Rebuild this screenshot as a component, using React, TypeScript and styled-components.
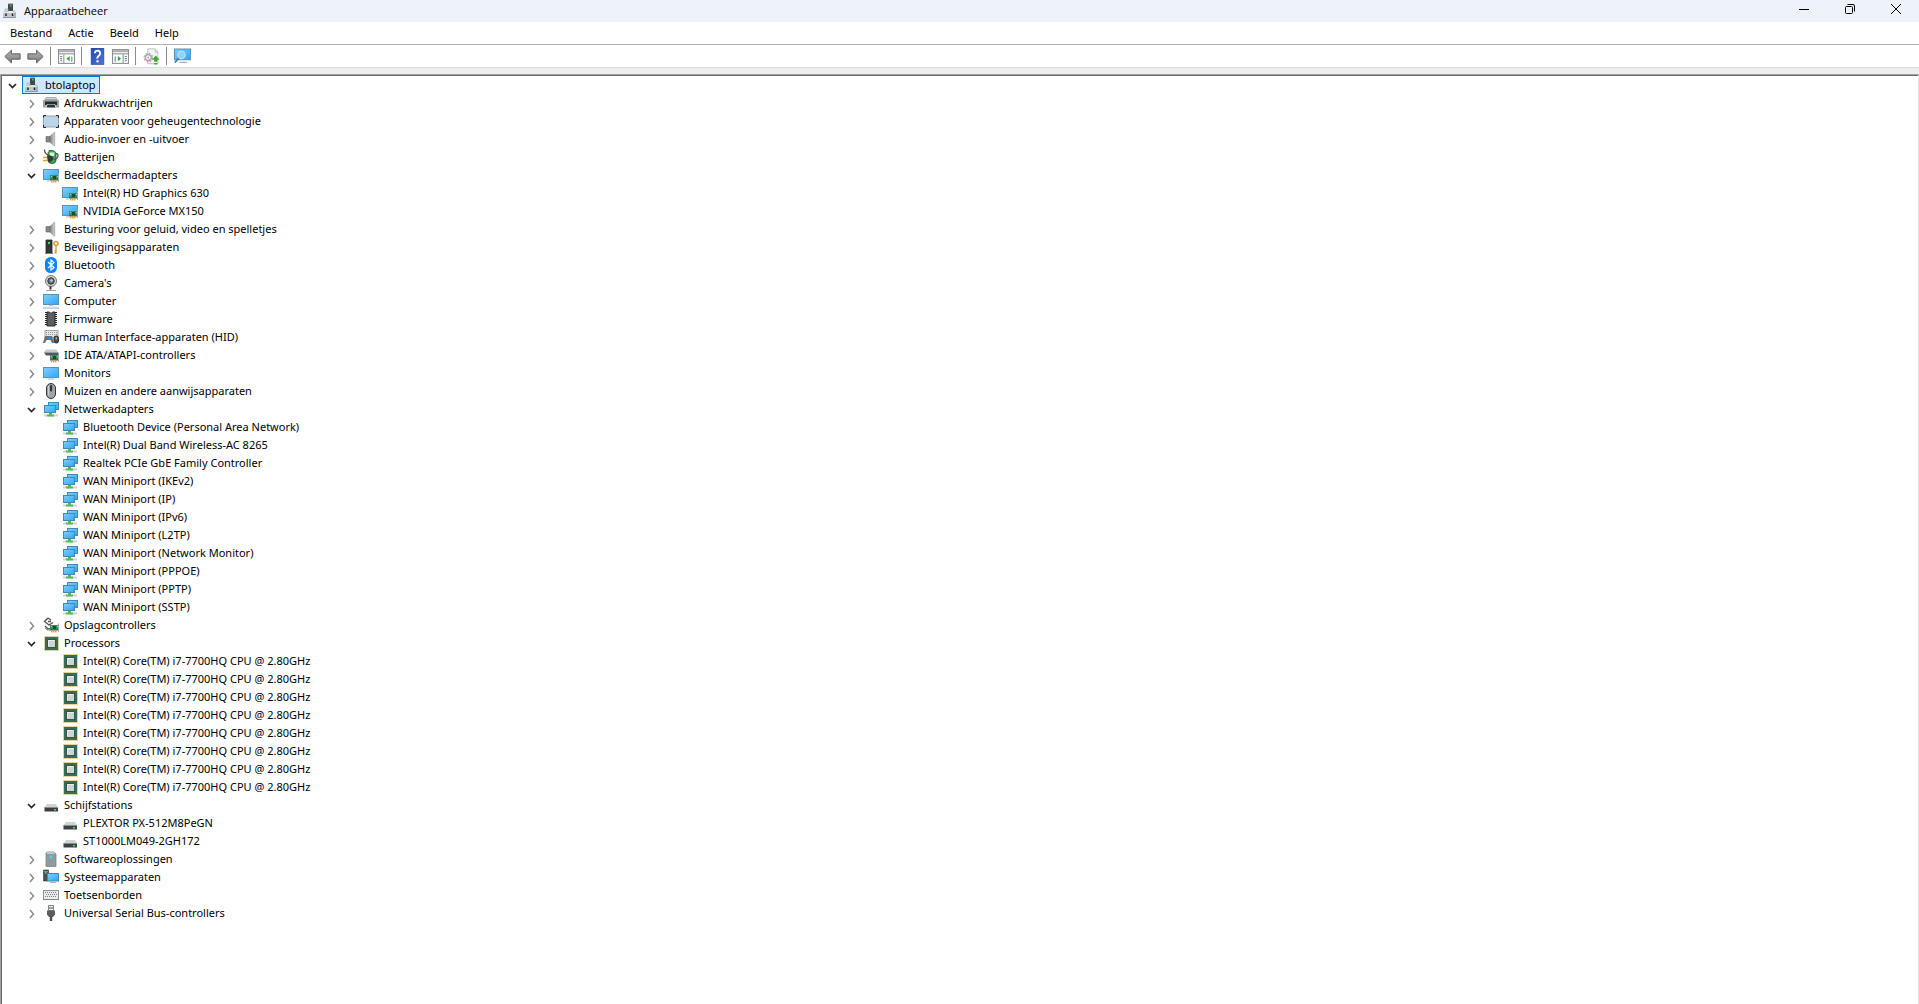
import React, { useState } from 'react';
import styled, { createGlobalStyle } from 'styled-components';

const GlobalStyle = createGlobalStyle`
  html, body { margin: 0; background: #fff; }
  body, button {
    font-family: 'Noto Sans', 'Open Sans', sans-serif;
    font-size: 11px;
    line-height: 16px;
    color: #000;
  }
  *, *::before, *::after { box-sizing: border-box; }
`;

const Window = styled.div`
  display: flex;
  flex-direction: column;
  min-height: 100vh;
  background: #fff;
`;

const TitleBar = styled.header`
  display: flex;
  align-items: flex-start;
  justify-content: space-between;
  height: 22px;
  padding-left: 2px;
  background: #eef2fa;
`;

const Caption = styled.h1`
  display: flex;
  align-items: center;
  gap: 6px;
  height: 21px;
  margin: 0;
  font-family: 'Open Sans', 'Noto Sans', sans-serif;
  font-size: 11px;
  font-weight: 400;
`;

const WindowButtons = styled.div`
  display: flex;
`;

const PlainButton = styled.button`
  display: flex;
  align-items: center;
  justify-content: center;
  margin: 0;
  padding: 0;
  border: 0;
  background: transparent;
  &:hover { background: #e5f3ff; }
`;

const WindowButton = styled(PlainButton)`
  width: 46px;
  height: 18px;
`;

const MenuBar = styled.nav`
  display: flex;
  height: 23px;
  padding-left: 2px;
  border-bottom: 1px solid #b0b0b0;
`;

const MenuItem = styled(PlainButton)`
  height: 22px;
  padding: 0 8px;
`;

const Toolbar = styled.div`
  display: flex;
  align-items: flex-end;
  height: 23px;
  padding-left: 1px;
  border-bottom: 1px solid #dcdcdc;
`;

const ToolButton = styled(PlainButton)`
  width: 23px;
  height: 21px;
`;

const Separator = styled.span`
  width: 8px;
  height: 20px;
  padding-left: 3px;
  &::before {
    content: '';
    display: block;
    width: 1px;
    height: 18px;
    background: #8c8c8c;
  }
`;

const Frame = styled.main`
  display: flex;
  flex: 1;
  padding-top: 6px;
  background: #eeeeee;
`;

const Panel = styled.div`
  flex: 1;
  border: 1px solid #a0a0a0;
  border-right-color: #e3e3e3;
  border-bottom: 0;
`;

const Tree = styled.ul`
  height: 100%;
  margin: 0;
  padding: 0 0 0 1px;
  list-style: none;
  background: #fff;
  border-top: 1px solid #696969;
  border-left: 1px solid #696969;
`;

const Branch = styled.ul`
  margin: 0;
  padding: 0 0 0 19px;
  list-style: none;
`;

const Row = styled.div`
  display: flex;
  height: 18px;
`;

const Toggle = styled(PlainButton)`
  width: 19px;
  height: 18px;
`;

const Indent = styled.span`
  width: 19px;
`;

const Label = styled.span<{ $selected?: boolean }>`
  display: flex;
  align-items: center;
  gap: 5px;
  height: 18px;
  padding: 0 3px 0 1px;
  border: 1px solid ${p => (p.$selected ? '#0078d7' : 'transparent')};
  background: ${p => (p.$selected ? '#cce8ff' : 'transparent')};
  white-space: nowrap;
`;

const Glyph = styled.svg`
  display: block;
  flex: none;
`;

const SharedDefs = styled.svg`
  display: block;
  width: 0;
  height: 0;
`;

const Gradients = () => (
  <SharedDefs aria-hidden="true">
    <defs>
      <linearGradient id="screen" x1="0" y1="0" x2="1" y2="1">
        <stop offset="0" stopColor="#7fd0fd" />
        <stop offset="1" stopColor="#2ea5fa" />
      </linearGradient>
      <linearGradient id="metal" x1="0" y1="0" x2="1" y2="0">
        <stop offset="0" stopColor="#6e7276" />
        <stop offset="1" stopColor="#c9cdd0" />
      </linearGradient>
      <linearGradient id="arrow" x1="0" y1="0" x2="0" y2="1">
        <stop offset="0" stopColor="#b4b4b4" />
        <stop offset="1" stopColor="#7d7d7d" />
      </linearGradient>
      <linearGradient id="help" x1="0" y1="0" x2="1" y2="1">
        <stop offset="0" stopColor="#2447a8" />
        <stop offset="1" stopColor="#4c76dc" />
      </linearGradient>
    </defs>
  </SharedDefs>
);

const Card = () => (
  <>
    <path d="M15.500 6.500V15" stroke="#a5abaf" />
    <rect x="7" y="8" width="8" height="5" fill="#3f8a68" />
    <path d="M7 13h8" stroke="#225c40" />
    <rect x="10" y="9" width="3" height="3" fill="#1c4a33" />
    <path d="M8 9.500h1M14 9.500h1" stroke="#9ad8b0" />
    <path d="M8 14.500h6" stroke="#f0a020" strokeWidth="2" strokeDasharray="1.500 .5" />
  </>
);

const icons: Record<string, React.ReactNode> = {
  machine: (
    <>
      <rect x="6" y="1" width="5" height="7" fill="#43484b" />
      <path d="M6 1h5" stroke="#777c7f" />
      <rect x="8" y="2" width="1.500" height="1.500" fill="#39c558" />
      <path d="M3 6h3v3H3z" fill="#dddfe0" stroke="#a4a8aa" strokeWidth=".7" />
      <path d="M11 7.500h2v2h-2z" fill="#b9bcbf" />
      <rect x="1" y="9" width="12.500" height="6" fill="#c3c5c7" />
      <path d="M1 14.500h12.500M13 9v6" stroke="#8f9395" />
      <path d="M1 9.500h12" stroke="#e2e4e5" />
      <path d="M4 10.500v2.500M10.500 10.500v2.500" stroke="#202326" strokeWidth="1.500" />
    </>
  ),
  printer: (
    <>
      <path d="M3 2.500h10l1 3H2z" fill="#d3d9dd" stroke="#8b9093" strokeWidth=".7" />
      <path d="M0 6q0-1.500 2-1.500h12q2 0 2 1.500v6.500H0z" fill="#9ca1a4" />
      <path d="M2 6.500h12v3.500H2z" fill="#26292b" />
      <path d="M4 9h8l1.500 4h-11z" fill="#e9ebec" />
      <path d="M4.500 9.500h7l1 3h-9z" fill="#303436" />
      <path d="M3 4.500h10" stroke="#5fc5a6" />
    </>
  ),
  memory: (
    <>
      <rect x=".5" y="3" width="15" height="11" rx="1" fill="#bdd3e6" stroke="#8fa8bd" />
      <path d="M.5 4.500v-2H3M13 2.500h2.500v2.500M15.500 12v2.500H13M3 14.500H.5V12" fill="none" stroke="#24282b" />
    </>
  ),
  speaker: (
    <>
      <path d="M3 5.500h4v5.500H3z" fill="#85898d" stroke="#5f6366" strokeWidth=".6" />
      <path d="M6.500 5.500 11 1v14.500L6.500 11z" fill="url(#metal)" />
      <path d="M11.500 1v14.500" stroke="#b5b8bb" strokeWidth="1.400" />
    </>
  ),
  battery: (
    <>
      <path d="M6 1.500h4l1.500 1q1.500.5 1.500 2v7q0 3-4 3t-4-3v-7q0-1.500 1-2z" fill="#32b14a" stroke="#30483a" strokeWidth=".8" />
      <path d="M6.500 3.500h5L11 7H7z" fill="#d9f3dc" />
      <path d="M1.500 .5q0 4 3.500 5.500M12.500 5q2.500-1 2.500 1.500T11 11" fill="none" stroke="#4a4f52" strokeWidth="1.200" />
      <path d="M4 6.500q5-1 6.500 3Q9 13.500 5 13z" fill="#34383b" />
      <path d="M0 8.500h4M0 11.500h4" stroke="#d9a82c" strokeWidth="1.300" />
    </>
  ),
  display: (
    <>
      <rect x=".5" y="2.500" width="15" height="10" fill="url(#screen)" stroke="#5b93b5" />
      <path d="M4 14h3" stroke="#b0b6ba" />
      <Card />
    </>
  ),
  security: (
    <>
      <path d="M3 1h6v13H3z" fill="#34383b" stroke="#202325" strokeWidth=".8" />
      <rect x="5" y="3" width="2" height="2" fill="#35e35a" />
      <path d="M2 14.500h8" stroke="#7c8184" />
      <circle cx="13" cy="4.500" r="2" fill="none" stroke="#d9a33a" strokeWidth="1.600" />
      <path d="M13 6.500v8M13 11.500h-1.500M13 13.500h-1.500" stroke="#d9a33a" strokeWidth="1.400" />
    </>
  ),
  bluetooth: (
    <>
      <rect x="2" y="0" width="12" height="16" rx="5.500" fill="#0a84ff" />
      <path d="m5 5 6 5.500L8 13V3l3 2.500L5 11" fill="none" stroke="#fff" strokeWidth="1.200" />
    </>
  ),
  camera: (
    <>
      <circle cx="8" cy="6" r="5.500" fill="#d4d6d8" stroke="#74787c" />
      <circle cx="8" cy="6" r="3.200" fill="#6b7074" stroke="#2b2f32" />
      <circle cx="8.500" cy="5.500" r="1.200" fill="#cbd5dc" />
      <path d="M7.500 11.500v3" stroke="#303437" strokeWidth="2" />
      <path d="M3 15.500h10" fill="none" stroke="#a0a5a8" />
    </>
  ),
  computer: (
    <>
      <rect x=".5" y="1.500" width="15" height="10" fill="url(#screen)" stroke="#5b93b5" />
      <path d="M6 12.500h4" stroke="#c0cbd3" />
      <path d="M0 15h16" stroke="#8fa5b4" />
      <path d="M1 14h14" stroke="#dbe3e8" />
    </>
  ),
  monitor: (
    <>
      <rect x=".5" y="2.500" width="15" height="10" fill="url(#screen)" stroke="#5b93b5" />
      <path d="M5 14h6" stroke="#a4b4bf" />
    </>
  ),
  firmware: (
    <>
      <path d="M3 1v14M13 1v14" stroke="#202325" strokeWidth="2" strokeDasharray="1 1" />
      <path d="M4 1h2q2 2.500 4 0h2v14H4z" fill="#5b5f62" stroke="#202325" strokeWidth=".9" />
    </>
  ),
  hid: (
    <>
      <rect x="2" y="1.500" width="13" height="7" fill="#e6e8ea" stroke="#a1a5a8" />
      <path d="M3 3.500h11M3 5.500h11" stroke="#8e9296" strokeDasharray="1 1" />
      <path d="M2 7h7l2 7H9L7.500 11h-4L2 14H0z" fill="#6a6f73" />
      <circle cx="6.500" cy="9" r="1.500" fill="#1e90e8" />
      <rect x="11" y="7" width="4.500" height="7" rx="2.200" fill="#4c5054" stroke="#25292c" />
      <path d="M13.200 8v2.500" stroke="#c5c9cc" />
    </>
  ),
  ide: (
    <>
      <path d="M3 2.500h10l2.500 3H1z" fill="#c8cbcd" />
      <path d="M1 5.500h14.500v3H3z" fill="#55595c" />
      <Card />
    </>
  ),
  mouse: (
    <>
      <rect x="3.500" y=".5" width="9" height="15" rx="4.500" fill="#9fa5ab" stroke="#303438" />
      <path d="M5.500 3v9.500" stroke="#ccd1d5" />
      <rect x="7" y="2" width="2.200" height="6.500" rx="1" fill="#32373b" />
    </>
  ),
  network: (
    <>
      <path d="M1 14.500h14" stroke="#cfd2d4" strokeWidth="2" />
      <rect x="5.500" y="1.500" width="10" height="7" fill="url(#screen)" stroke="#4489b5" />
      <rect x="1.500" y="4.500" width="11" height="7" fill="url(#screen)" stroke="#4489b5" />
      <path d="M6 12h3v1.500h2V15.500H4v-2h2z" fill="#4fbf53" />
    </>
  ),
  storage: (
    <>
      <path d="M5 1 1.500 4.500 6 8l4-2.500M5 1l3 2M5 4.500h3M2 9l3 3 3-1" fill="none" stroke="#4d5154" strokeWidth="1.300" />
      <path d="M2 11q1.500 3 5 2" fill="none" stroke="#7b7f82" />
      <Card />
    </>
  ),
  cpu: (
    <>
      <rect x="1.500" y="1.500" width="14" height="14" fill="none" stroke="#c4a83e" strokeDasharray="1 1" />
      <rect x="2" y="2" width="13" height="13" fill="#3a6b54" />
      <rect x="4" y="4" width="9" height="9" fill="#2c5a44" />
      <rect x="5" y="5" width="7" height="7" fill="#d2d4d3" />
      <path d="M5.500 11V5.500h6" fill="none" stroke="#eceded" />
    </>
  ),
  disk: (
    <>
      <path d="M4 7h9L15 10.500H1.500z" fill="#d0d3d5" />
      <rect x="1.500" y="10.500" width="13.500" height="4" fill="#3d4143" />
      <path d="M1.500 10.500H15" stroke="#8a8e90" />
      <rect x="11" y="12" width="2" height="1.500" fill="#3ee05b" />
    </>
  ),
  software: (
    <>
      <path d="M4 1h7l2 2v12.500H3V2z" fill="#8f999f" stroke="#7b858b" strokeWidth=".8" />
      <path d="M4 1h7l1 2H3.500z" fill="#c0c7cb" />
      <circle cx="8" cy="6" r="1.500" fill="#43d5ee" />
    </>
  ),
  system: (
    <>
      <path d="M.5 1h5v11h-5z" fill="#4b5053" stroke="#34383b" strokeWidth=".6" />
      <path d="M1 2.500h4" stroke="#8a8f93" />
      <rect x="2" y="3" width="1.500" height="1.500" fill="#40dc60" />
      <rect x="4.500" y="4.500" width="11" height="7.500" fill="url(#screen)" stroke="#4489b5" />
      <path d="M7 13.500h6" stroke="#aab5bc" />
    </>
  ),
  keyboard: (
    <>
      <rect x=".5" y="3.500" width="15" height="9" fill="#e9ebed" stroke="#8f9498" />
      <path d="M2 5.500h12M2 9.500h12" stroke="#7b8286" strokeDasharray="1 1" />
      <path d="M3 7.500h11" stroke="#7b8286" strokeDasharray="1 1" />
      <path d="M0 12.500h16" stroke="#7d8387" />
    </>
  ),
  usb: (
    <>
      <path d="M5.500.5h5v5h-5z" fill="#eceeef" stroke="#7f8487" />
      <path d="M7 2v2M9 2v2" stroke="#55595c" />
      <path d="M4 5.500h8v4L10 12H6L4 9.500z" fill="#5a5e61" />
      <path d="M8 11.500V16" stroke="#494d50" strokeWidth="2.400" />
    </>
  ),
};

const Icon = ({ name, size = 16 }: { name: string; size?: number }) => (
  <Glyph width={size} height={size} viewBox="0 0 16 16" aria-hidden="true">
    {icons[name]}
  </Glyph>
);

const Chevron = ({ open }: { open: boolean }) => (
  <Glyph width="11" height="12" viewBox="0 0 11 12" aria-hidden="true">
    {open ? (
      <path d="m2 5 3.500 3.500L9 5" fill="none" stroke="#262626" strokeWidth="1.700" />
    ) : (
      <path d="m4 3 3.500 4L4 11" fill="none" stroke="#8c8c8c" strokeWidth="1.500" />
    )}
  </Glyph>
);

interface Device {
  icon: string;
  name: string;
  children?: Device[];
}

const same = (icon: string, names: string[]): Device[] => names.map(name => ({ icon, name }));

const categories: Device[] = [
  { icon: 'printer', name: 'Afdrukwachtrijen' },
  { icon: 'memory', name: 'Apparaten voor geheugentechnologie' },
  { icon: 'speaker', name: 'Audio-invoer en -uitvoer' },
  { icon: 'battery', name: 'Batterijen' },
  {
    icon: 'display',
    name: 'Beeldschermadapters',
    children: same('display', ['Intel(R) HD Graphics 630', 'NVIDIA GeForce MX150']),
  },
  { icon: 'speaker', name: 'Besturing voor geluid, video en spelletjes' },
  { icon: 'security', name: 'Beveiligingsapparaten' },
  { icon: 'bluetooth', name: 'Bluetooth' },
  { icon: 'camera', name: "Camera's" },
  { icon: 'computer', name: 'Computer' },
  { icon: 'firmware', name: 'Firmware' },
  { icon: 'hid', name: 'Human Interface-apparaten (HID)' },
  { icon: 'ide', name: 'IDE ATA/ATAPI-controllers' },
  { icon: 'monitor', name: 'Monitors' },
  { icon: 'mouse', name: 'Muizen en andere aanwijsapparaten' },
  {
    icon: 'network',
    name: 'Netwerkadapters',
    children: same('network', [
      'Bluetooth Device (Personal Area Network)',
      'Intel(R) Dual Band Wireless-AC 8265',
      'Realtek PCIe GbE Family Controller',
      'WAN Miniport (IKEv2)',
      'WAN Miniport (IP)',
      'WAN Miniport (IPv6)',
      'WAN Miniport (L2TP)',
      'WAN Miniport (Network Monitor)',
      'WAN Miniport (PPPOE)',
      'WAN Miniport (PPTP)',
      'WAN Miniport (SSTP)',
    ]),
  },
  { icon: 'storage', name: 'Opslagcontrollers' },
  {
    icon: 'cpu',
    name: 'Processors',
    children: same('cpu', Array(8).fill('Intel(R) Core(TM) i7-7700HQ CPU @ 2.80GHz')),
  },
  {
    icon: 'disk',
    name: 'Schijfstations',
    children: same('disk', ['PLEXTOR PX-512M8PeGN', 'ST1000LM049-2GH172']),
  },
  { icon: 'software', name: 'Softwareoplossingen' },
  { icon: 'system', name: 'Systeemapparaten' },
  { icon: 'keyboard', name: 'Toetsenborden' },
  { icon: 'usb', name: 'Universal Serial Bus-controllers' },
];

const Node = ({ device, level = 1 }: { device: Device; level?: number }) => {
  const [open, setOpen] = useState(Boolean(device.children));
  return (
    <li>
      <Row>
        {level < 2 ? (
          <Toggle aria-label={device.name} aria-expanded={open} onClick={() => setOpen(!open)}>
            <Chevron open={open} />
          </Toggle>
        ) : (
          <Indent />
        )}
        <Label $selected={level === 0}>
          <Icon name={device.icon} />
          {device.name}
        </Label>
      </Row>
      {open && device.children && (
        <Branch>
          {device.children.map((child, i) => (
            <Node key={i} device={child} level={level + 1} />
          ))}
        </Branch>
      )}
    </li>
  );
};

const PaneArt = () => (
  <>
    <rect x=".5" y="1.500" width="15" height="13" fill="#fff" stroke="#8b8f92" />
    <path d="M1 3h14" stroke="#a9adb0" strokeWidth="2" />
    <path d="M1 5.500h14" stroke="#8b8f92" />
  </>
);

const Tool = ({ label, children }: { label: string; children: React.ReactNode }) => (
  <ToolButton aria-label={label}>
    <Glyph width="17" height="17" viewBox="0 0 16 16" aria-hidden="true">
      {children}
    </Glyph>
  </ToolButton>
);

export default function App() {
  return (
    <Window>
      <GlobalStyle />
      <Gradients />
      <TitleBar>
        <Caption>
          <Icon name="machine" />
          Apparaatbeheer
        </Caption>
        <WindowButtons>
          <WindowButton aria-label="Minimaliseren">
            <Glyph width="10" height="10" viewBox="0 0 10 10">
              <path d="M0 5.500h10" stroke="#000" />
            </Glyph>
          </WindowButton>
          <WindowButton aria-label="Verkleinen">
            <Glyph width="10" height="10" viewBox="0 0 10 10" fill="none" stroke="#000">
              <rect x=".5" y="2.500" width="7" height="7" rx="1" />
              <path d="M2.500.5H8Q9.500.5 9.500 2v5.500" />
            </Glyph>
          </WindowButton>
          <WindowButton aria-label="Sluiten">
            <Glyph width="10" height="10" viewBox="0 0 10 10">
              <path d="m0 0 10 10M10 0 0 10" stroke="#000" />
            </Glyph>
          </WindowButton>
        </WindowButtons>
      </TitleBar>
      <MenuBar>
        <MenuItem>Bestand</MenuItem>
        <MenuItem>Actie</MenuItem>
        <MenuItem>Beeld</MenuItem>
        <MenuItem>Help</MenuItem>
      </MenuBar>
      <Toolbar>
        <Tool label="Vorige">
          <path d="M.8 8 7 2v3.500h8.200v5H7V14z" fill="url(#arrow)" stroke="#5c5c5c" strokeWidth=".9" />
        </Tool>
        <Tool label="Volgende">
          <path d="M15.200 8 9 2v3.500H.8v5H9V14z" fill="url(#arrow)" stroke="#5c5c5c" strokeWidth=".9" />
        </Tool>
        <Separator />
        <Tool label="Consolestructuur weergeven">
          <PaneArt />
          <path d="M5.500 6v8" stroke="#8b8f92" />
          <path d="M2 8h2M2 10h2M2 12h2M13 8v5" stroke="#6785a5" />
          <path d="M11 7.500v5L8 10z" fill="#2fa52f" />
        </Tool>
        <Separator />
        <Tool label="Help">
          <rect x="2" y="0" width="12" height="15.500" fill="url(#help)" stroke="#2447a0" strokeWidth=".6" />
          <path d="M5.500 5Q5.500 2.500 8 2.500T10.500 5Q10.500 6.500 9 7.500T8 10" fill="none" stroke="#fff" strokeWidth="1.800" />
          <rect x="7" y="11.500" width="2" height="2" fill="#fff" />
        </Tool>
        <Tool label="Actievenster weergeven">
          <PaneArt />
          <path d="M10.500 6v8" stroke="#8b8f92" />
          <path d="M12 8h2M12 10h2M12 12h2M3 8v5" stroke="#6785a5" />
          <path d="M5.500 7.500v5l3-2.500z" fill="#2fa52f" />
        </Tool>
        <Separator />
        <Tool label="Stuurprogramma's bijwerken">
          <path d="M4.500.8h7l2.500 3v11H4.500z" fill="#f4f5f5" stroke="#b5b8ba" strokeWidth=".8" />
          <path d="M11.500 1v3H14" fill="none" stroke="#b5b8ba" strokeWidth=".8" />
          <circle cx="5" cy="9" r="2.800" fill="#fff" stroke="#a0a4a6" strokeWidth="1.300" />
          <circle cx="5" cy="9" r="4" fill="none" stroke="#a0a4a6" strokeDasharray="1.600 1.540" />
          <circle cx="5" cy="9" r="1" fill="#a0a4a6" />
          <path d="m12 7 3.500 4H13.500v2h-3v-2h-2zM10.500 14h3v1.500h-3z" fill="#27b52c" />
        </Tool>
        <Separator />
        <Tool label="Zoeken naar gewijzigde apparaten">
          <rect x=".5" y="1" width="15" height="10" fill="url(#screen)" stroke="#5b93b5" />
          <path d="M5 13.500h7" stroke="#8fa5b4" />
          <circle cx="7" cy="6.500" r="3.500" fill="#8fd4fb" stroke="#c7e5f5" />
          <path d="M4.500 9.500.8 13.800" stroke="#4d80a3" strokeWidth="1.600" />
        </Tool>
      </Toolbar>
      <Frame>
        <Panel>
          <Tree>
            <Node device={{ icon: 'machine', name: 'btolaptop', children: categories }} level={0} />
          </Tree>
        </Panel>
      </Frame>
    </Window>
  );
}
